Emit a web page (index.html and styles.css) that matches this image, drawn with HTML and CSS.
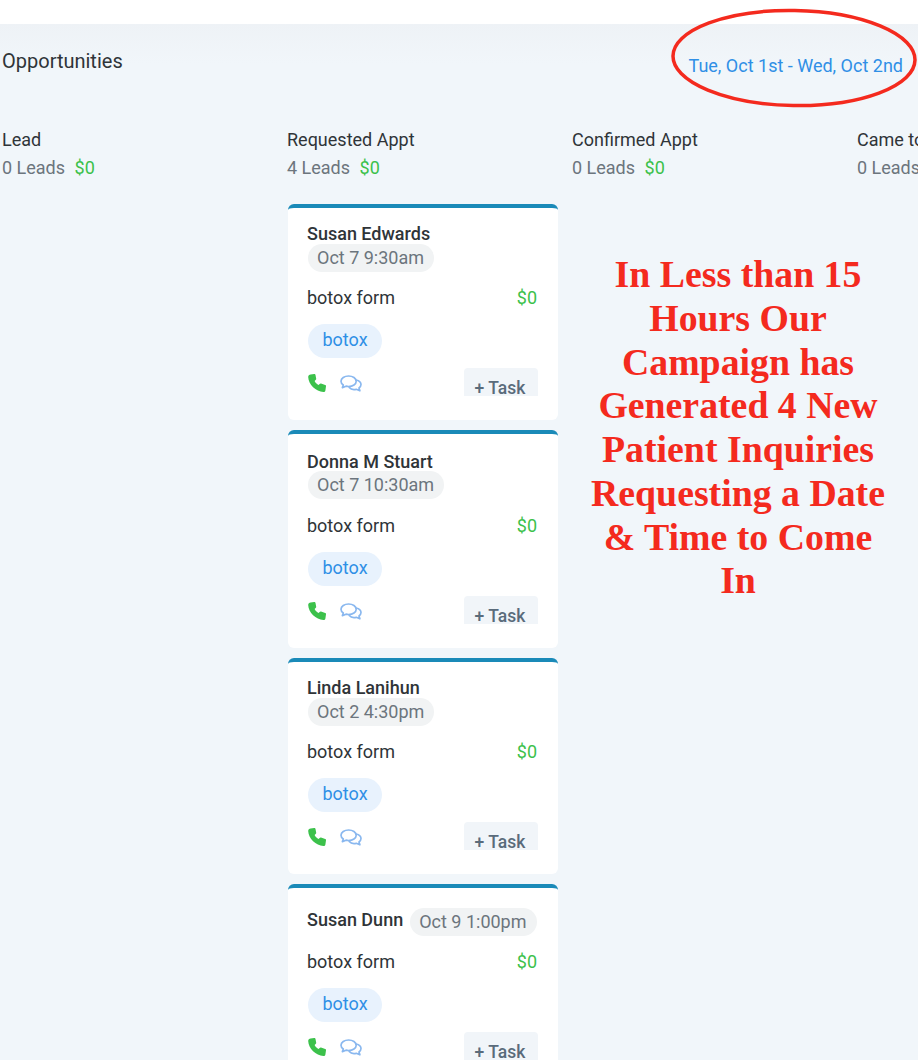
FILE: index.html
```html
<!DOCTYPE html>
<html lang="en">
  <head>
    <meta charset="UTF-8" />
    <meta name="viewport" content="width=device-width, initial-scale=1.0" />
    <title>Opportunities</title>
    <link rel="stylesheet" href="styles.css">
  </head>

  <body>
    <svg width="0" height="0" class="defs">
      <symbol id="phone" viewBox="0 0 18 18">
        <path d="M2.6 .5 L6.2 0 C6.9 0 7.4 .4 7.5 1 L8.2 4.8 C8.3 5.4 8 5.8 7.6 6.1 L6.6 7 C7.3 8.6 8.9 10.3 10.6 11 L11.6 9.9 C12 9.5 12.5 9.3 13 9.5 L17.2 11 C17.8 11.2 18.1 11.7 18 12.3 L17.4 16.4 C17.2 17.4 16.5 18 15.4 18 C8 17.7 .4 10.4 .2 3 C.2 1.6 1.2 .7 2.6 .5 Z" fill="#3cc14b"/>
      </symbol>
      <symbol id="chat" viewBox="0 0 22 18">
        <g fill="none" stroke="#8ab8ef" stroke-width="1.7" stroke-linejoin="round" stroke-linecap="round">
          <path d="M8.6 1 C4.4 1 1 3.3 1 6.2 C1 7.7 1.9 9 3.3 10 L2.4 12.6 L6 11.2 C6.9 11.4 7.7 11.5 8.6 11.5 C12.8 11.5 16.2 9.2 16.2 6.2 C16.2 3.3 12.8 1 8.6 1 Z"/>
          <path d="M16.1 5 C19 5.7 21 7.4 21 9.6 C21 11 20.2 12.1 19 13 L19.9 15.8 L16.2 14.3 C13.4 14.9 10.6 14.1 9.2 12.4"/>
        </g>
      </symbol>
    </svg>

    <div class="topbar"></div>
    <div class="board">
      <div class="boardHeader">
        <h1 class="boardTitle">Opportunities</h1>
        <a class="dateRange">Tue, Oct 1st - Wed, Oct 2nd</a>
      </div>

      <div class="columns">
        <section class="column">
          <h2 class="columnName">Lead</h2>
          <p class="columnStats">0 Leads <span class="money">$0</span></p>
        </section>

        <section class="column">
          <h2 class="columnName">Requested Appt</h2>
          <p class="columnStats">4 Leads <span class="money">$0</span></p>

          <div class="cards">
            <article class="card">
              <div class="who">
                <span class="name">Susan Edwards</span>
                <span class="when">Oct 7 9:30am</span>
              </div>
              <div class="formRow"><span>botox form</span><span class="money">$0</span></div>
              <span class="tag">botox</span>
              <div class="actions">
                <svg class="icon"><use href="#phone"/></svg>
                <svg class="icon chat"><use href="#chat"/></svg>
                <button class="taskBtn">+ Task</button>
              </div>
            </article>

            <article class="card cardTall">
              <div class="who">
                <span class="name">Donna M Stuart</span>
                <span class="when">Oct 7 10:30am</span>
              </div>
              <div class="formRow"><span>botox form</span><span class="money">$0</span></div>
              <span class="tag">botox</span>
              <div class="actions">
                <svg class="icon"><use href="#phone"/></svg>
                <svg class="icon chat"><use href="#chat"/></svg>
                <button class="taskBtn">+ Task</button>
              </div>
            </article>

            <article class="card">
              <div class="who">
                <span class="name">Linda Lanihun</span>
                <span class="when">Oct 2 4:30pm</span>
              </div>
              <div class="formRow"><span>botox form</span><span class="money">$0</span></div>
              <span class="tag">botox</span>
              <div class="actions">
                <svg class="icon"><use href="#phone"/></svg>
                <svg class="icon chat"><use href="#chat"/></svg>
                <button class="taskBtn">+ Task</button>
              </div>
            </article>

            <article class="card">
              <div class="who whoInline">
                <span class="name">Susan Dunn</span>
                <span class="when">Oct 9 1:00pm</span>
              </div>
              <div class="formRow"><span>botox form</span><span class="money">$0</span></div>
              <span class="tag">botox</span>
              <div class="actions">
                <svg class="icon"><use href="#phone"/></svg>
                <svg class="icon chat"><use href="#chat"/></svg>
                <button class="taskBtn">+ Task</button>
              </div>
            </article>
          </div>
        </section>

        <section class="column">
          <h2 class="columnName">Confirmed Appt</h2>
          <p class="columnStats">0 Leads <span class="money">$0</span></p>
        </section>

        <section class="column">
          <h2 class="columnName">Came to</h2>
          <p class="columnStats">0 Leads <span class="money">$0</span></p>
        </section>
      </div>
    </div>

    <!-- annotations drawn on top of the screenshot -->
    <svg class="circleNote" width="256" height="108" viewBox="0 0 256 108">
      <ellipse cx="127" cy="54" rx="121" ry="47.5" fill="none" stroke="#f42a1e" stroke-width="3.5" transform="rotate(1 127 54)"/>
    </svg>
    <p class="redNote">In Less than 15 Hours Our Campaign has Generated 4 New Patient Inquiries Requesting a Date &amp; Time to Come In</p>
  </body>
</html>
```

FILE: styles.css
```css
* {
  margin: 0;
  padding: 0;
  box-sizing: border-box;
}
html, body {
  height: 100%;
  overflow: hidden;
}
body {
  position: relative;
  background-color: #f1f6fa;
  font-family: Roboto, "Liberation Sans", sans-serif;
  color: #2f3438;
}
.defs {
  position: absolute;
}
.topbar {
  height: 24px;
  background-color: #fff;
}
.board {
  padding-left: 2px;
  background: linear-gradient(#eef2f6, #f1f6fa 40px);
}
.boardHeader {
  display: flex;
  justify-content: space-between;
  padding: 25px 15px 0 0;
  height: 104px;
}
.boardTitle {
  font-size: 20px;
  font-weight: 400;
  line-height: 24px;
}
.dateRange {
  margin-top: 5px;
  font-size: 18px;
  line-height: 24px;
  color: #2f8fe6;
}
.columns {
  display: flex;
  width: 1200px;
}
.column {
  width: 285px;
  flex: none;
}
.columnName {
  font-size: 18px;
  font-weight: 400;
  line-height: 24px;
}
.columnStats {
  margin-top: 4px;
  font-size: 18px;
  line-height: 24px;
  color: #6c757d;
}
.money {
  color: #3cc14b;
}
.columnStats .money {
  margin-left: 5px;
}
.cards {
  display: flex;
  flex-direction: column;
  gap: 10px;
  margin-top: 24px;
  margin-left: 1px;
  width: 270px;
}
.card {
  height: 216px;
  padding: 16px 20px 0 20px;
  background-color: #fff;
  border-top: 4px solid #1a8ab8;
  border-radius: 6px;
}
.who {
  display: flex;
  flex-wrap: wrap;
  align-items: flex-start;
  column-gap: 7px;
  height: 48px;
}
.name {
  width: 100%;
  font-size: 18px;
  font-weight: 500;
  line-height: 20px;
  margin-left: -1px;
}
.when {
  height: 28px;
  padding: 0 10px 0 9px;
  font-size: 18px;
  line-height: 28px;
  color: #6c757d;
  background-color: #f1f3f4;
  border-radius: 14px;
}
.whoInline {
  padding-top: 4px;
  height: 32px;
}
.whoInline .name {
  width: auto;
  line-height: 24px;
}
.cardTall {
  height: 218px;
}
.cardTall .name {
  padding-top: 2px;
  margin-bottom: -2px;
}
.cardTall .who {
  height: 50px;
}
.formRow {
  display: flex;
  justify-content: space-between;
  margin-top: 14px;
  margin-left: -1px;
  margin-right: 1px;
  font-size: 18px;
  line-height: 24px;
}
.tag {
  display: inline-block;
  margin-top: 14px;
  height: 34px;
  padding: 0 14.5px;
  font-size: 18px;
  line-height: 32px;
  color: #2f8fe6;
  background-color: #e8f2fd;
  border-radius: 17px;
}
.actions {
  display: flex;
  align-items: flex-start;
  margin-top: 10px;
  height: 28px;
}
.icon {
  width: 18px;
  height: 18px;
  margin-top: 6px;
}
.chat {
  width: 22px;
  margin-top: 7px;
  margin-left: 14px;
}
.taskBtn {
  margin-left: auto;
  width: 74px;
  height: 28px;
  padding: 12px 2px 0 0;
  border: none;
  border-radius: 4px 4px 0 0;
  font: 500 17.5px/16px Roboto, "Liberation Sans", sans-serif;
  color: #5a6b7b;
  background-color: #f1f5f9;
}
.circleNote {
  position: absolute;
  left: 667px;
  top: 4px;
}
.redNote {
  position: absolute;
  left: 588px;
  top: 253px;
  width: 300px;
  font-family: "Liberation Serif", "Times New Roman", serif;
  font-size: 37.8px;
  font-weight: 700;
  line-height: 43.75px;
  text-align: center;
  color: #f42a1e;
}
```
